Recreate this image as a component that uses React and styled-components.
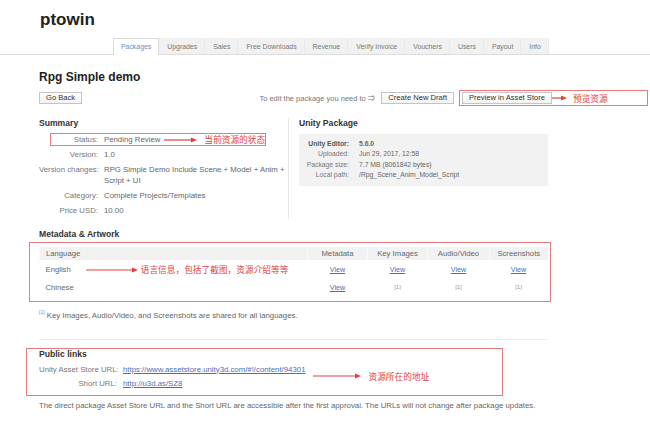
import React from "react";
import styled, { createGlobalStyle } from "styled-components";

const RED = "#e2413b";
const BOX_RED = "#e57b7b";

const GlobalStyle = createGlobalStyle`
  body {
    margin: 0;
    background: #fff;
    font-family: "Liberation Sans", Arial, "Noto Sans CJK SC", sans-serif;
    color: #666;
  }
  * { box-sizing: border-box; }
`;

const tabs = [
  "Packages",
  "Upgrades",
  "Sales",
  "Free Downloads",
  "Revenue",
  "Verify Invoice",
  "Vouchers",
  "Users",
  "Payout",
  "Info",
];

const summary = [
  { label: "Status:", value: "Pending Review", note: "当前资源的状态", highlight: true },
  { label: "Version:", value: "1.0" },
  { label: "Version changes:", value: "RPG Simple Demo Include Scene + Model + Anim + Script + UI" },
  { label: "Category:", value: "Complete Projects/Templates" },
  { label: "Price USD:", value: "10.00" },
];

const unityInfo = [
  { label: "Unity Editor:", value: "5.6.0", strong: true },
  { label: "Uploaded:", value: "Jun 29, 2017, 12:58" },
  { label: "Package size:", value: "7.7 MB (8061842 bytes)" },
  { label: "Local path:", value: "/Rpg_Scene_Anim_Model_Script" },
];

const Arrow = ({ width }) => (
  <ArrowSvg width={width} height="6" viewBox={`0 0 ${width} 6`}>
    <line x1="0" y1="3" x2={width - 4} y2="3" stroke={RED} strokeWidth="1.2" />
    <polygon points={`${width - 6},0.6 ${width},3 ${width - 6},5.4`} fill={RED} />
  </ArrowSvg>
);

const App = () => {
  return (
    <Page>
      <GlobalStyle />
      <Brand>ptowin</Brand>
      <TabBar>
        {tabs.map((t) => (
          <Tab key={t} $active={t === "Packages"}>
            {t}
          </Tab>
        ))}
      </TabBar>

      <Main>
        <Title>Rpg Simple demo</Title>
        <Actions>
          <Button>Go Back</Button>
          <ActionGroup>
            <Hint>To edit the package you need to ⇒</Hint>
            <Button>Create New Draft</Button>
            <PreviewBox>
              <Button>Preview in Asset Store</Button>
              <Arrow width={15} />
              <Note>预览资源</Note>
            </PreviewBox>
          </ActionGroup>
        </Actions>

        <Columns>
          <SummaryCol>
            <SectionHeading>Summary</SectionHeading>
            <SummaryList>
              {summary.map((row) => (
                <SummaryRow key={row.label} $highlight={row.highlight}>
                  <Label>{row.label}</Label>
                  <Value>
                    {row.value}
                    {row.note && (
                      <>
                        <Arrow width={33} />
                        <Note>{row.note}</Note>
                      </>
                    )}
                  </Value>
                </SummaryRow>
              ))}
            </SummaryList>
          </SummaryCol>
          <PackageCol>
            <SectionHeading>Unity Package</SectionHeading>
            <InfoBox>
              {unityInfo.map((row) => (
                <InfoRow key={row.label} $strong={row.strong}>
                  <span>{row.label}</span>
                  <span>{row.value}</span>
                </InfoRow>
              ))}
            </InfoBox>
          </PackageCol>
        </Columns>

        <MetaHeading>Metadata &amp; Artwork</MetaHeading>
        <MetaBox>
          <MetaTable>
            <colgroup>
              <col style={{ width: 268 }} />
              <col style={{ width: 60 }} />
              <col style={{ width: 60 }} />
              <col style={{ width: 62 }} />
              <col style={{ width: 58 }} />
            </colgroup>
            <thead>
              <tr>
                <Th $left>Language</Th>
                <Th>Metadata</Th>
                <Th>Key Images</Th>
                <Th>Audio/Video</Th>
                <Th>Screenshots</Th>
              </tr>
            </thead>
            <tbody>
              <tr>
                <Td $left>
                  <LangCell>
                    English
                    <LangArrow>
                      <Arrow width={52} />
                    </LangArrow>
                    <Note>语言信息，包括了截图，资源介绍等等</Note>
                  </LangCell>
                </Td>
                <Td><TableLink>View</TableLink></Td>
                <Td><TableLink>View</TableLink></Td>
                <Td><TableLink>View</TableLink></Td>
                <Td><TableLink>View</TableLink></Td>
              </tr>
              <tr>
                <Td $left>Chinese</Td>
                <Td><TableLink>View</TableLink></Td>
                <Td><Ref>[1]</Ref></Td>
                <Td><Ref>[1]</Ref></Td>
                <Td><Ref>[1]</Ref></Td>
              </tr>
            </tbody>
          </MetaTable>
        </MetaBox>
        <Footnote>
          <sup>[1]</sup> Key Images, Audio/Video, and Screenshots are shared for all languages.
        </Footnote>

        <Divider />

        <PublicBox>
          <SectionHeading>Public links</SectionHeading>
          <LinksBody>
            <LinkRows>
              <LinkRow>
                <Label>Unity Asset Store URL:</Label>
                <UrlLink>https://www.assetstore.unity3d.com/#!/content/94301</UrlLink>
              </LinkRow>
              <LinkRow>
                <Label>Short URL:</Label>
                <UrlLink>http://u3d.as/SZ8</UrlLink>
              </LinkRow>
            </LinkRows>
            <LinksNote>
              <Arrow width={48} />
              <Note>资源所在的地址</Note>
            </LinksNote>
          </LinksBody>
        </PublicBox>

        <Footer>
          The direct package Asset Store URL and the Short URL are accessible after the first
          approval. The URLs will not change after package updates.
        </Footer>
      </Main>
    </Page>
  );
};

const Page = styled.div`
  width: 650px;
  height: 423px;
  overflow: hidden;
`;

const Brand = styled.h1`
  margin: 0;
  padding-left: 40px;
  height: 38px;
  line-height: 39px;
  font-size: 17px;
  font-weight: 700;
  color: #222;
`;

const TabBar = styled.nav`
  display: flex;
  align-items: flex-start;
  height: 17px;
  padding-left: 113px;
  border-bottom: 1px solid #dcdcdc;
`;

const Tab = styled.a`
  display: block;
  height: ${(p) => (p.$active ? "17px" : "16px")};
  padding: 0 7px;
  line-height: 16px;
  font-size: 6.9px;
  color: ${(p) => (p.$active ? "#6d8cbf" : "#777")};
  background: ${(p) => (p.$active ? "#fff" : "#f1f1f1")};
  border: 1px solid ${(p) => (p.$active ? "#dcdcdc" : "#f1f1f1")};
  border-bottom: none;
  border-right-color: ${(p) => (p.$active ? "#dcdcdc" : "#e9e9e9")};
  position: relative;
`;

const Main = styled.main`
  padding-left: 39px;
  font-size: 7.8px;
  line-height: 11px;
`;

const Title = styled.h2`
  margin: 14px 0 0;
  font-size: 12px;
  line-height: 16px;
  font-weight: 700;
  color: #222;
`;

const Actions = styled.div`
  display: flex;
  align-items: center;
  justify-content: space-between;
  height: 16px;
  margin-top: 5px;
  padding-right: 2px;
`;

const ActionGroup = styled.div`
  display: flex;
  align-items: center;
  gap: 6px;
`;

const Hint = styled.span`
  font-size: 7.5px;
  color: #777;
`;

const Button = styled.button`
  height: 12px;
  padding: 0 6px;
  font-family: inherit;
  font-size: 7.6px;
  line-height: 10px;
  color: #333;
  background: linear-gradient(#fff, #f3f3f3);
  border: 1px solid #c4c4c4;
  border-radius: 0;
`;

const PreviewBox = styled.div`
  display: flex;
  align-items: center;
  width: 189px;
  height: 16px;
  margin-left: -1px;
  padding-left: 2px;
  border: 1px solid ${BOX_RED};

  & > span {
    margin-left: 6px;
  }
`;

const ArrowSvg = styled.svg`
  display: block;
  flex: none;
`;

const Note = styled.span`
  font-family: "Noto Sans CJK SC", sans-serif;
  font-size: 8.7px;
  line-height: 11px;
  color: ${RED};
  white-space: nowrap;
`;

const Columns = styled.div`
  display: grid;
  grid-template-columns: 249px 260px;
  margin-top: 12px;
`;

const SummaryCol = styled.section`
  padding-bottom: 3px;
`;

const PackageCol = styled.section`
  border-left: 1px solid #e8e8e8;
  padding-left: 10px;
`;

const SectionHeading = styled.h3`
  margin: 0;
  font-size: 8.6px;
  line-height: 11px;
  font-weight: 700;
  color: #333;
`;

const SummaryList = styled.div`
  display: flex;
  flex-direction: column;
  gap: 4px;
  margin-top: 5px;
`;

const SummaryRow = styled.div`
  position: relative;
  display: grid;
  grid-template-columns: 59px 194px;
  column-gap: 6px;

  ${(p) =>
    p.$highlight &&
    `
    &::before {
      content: "";
      position: absolute;
      left: 11px;
      right: 22px;
      top: -1px;
      bottom: -1px;
      border: 1px solid ${BOX_RED};
    }
  `}
`;

const Label = styled.span`
  text-align: right;
  color: #777;
  white-space: nowrap;
`;

const Value = styled.span`
  display: flex;
  flex-wrap: wrap;
  align-items: center;
  gap: 0 5px;
  color: #666;
  & > svg {
    margin-left: -1px;
  }
  & > svg + span {
    margin-left: 2px;
  }
`;

const InfoBox = styled.div`
  height: 52px;
  margin-top: 5px;
  padding-top: 5px;
  background: #f2f2f2;
`;

const InfoRow = styled.div`
  display: grid;
  grid-template-columns: 50px 1fr;
  column-gap: 10px;
  font-size: 6.8px;
  line-height: 10.3px;
  color: #666;
  font-weight: ${(p) => (p.$strong ? 700 : 400)};

  & > span:first-child {
    text-align: right;
    color: ${(p) => (p.$strong ? "#555" : "#777")};
  }
`;

const MetaHeading = styled(SectionHeading)`
  margin-top: 9.5px;
`;

const MetaBox = styled.div`
  width: 522px;
  margin: 2.5px 0 0 -10px;
  padding: 4px 3px 5px 9px;
  border: 1px solid ${BOX_RED};
`;

const MetaTable = styled.table`
  width: 508px;
  border-collapse: collapse;
  table-layout: fixed;
`;

const Th = styled.th`
  height: 13px;
  padding: 0 0 0 ${(p) => (p.$left ? "6px" : "0")};
  background: #f2f2f2;
  font-weight: 400;
  font-size: 7.7px;
  color: #666;
  text-align: ${(p) => (p.$left ? "left" : "center")};
  border-left: 1px solid #fafafa;
`;

const Td = styled.td`
  height: 18px;
  padding: 0 0 0 ${(p) => (p.$left ? "6px" : "0")};
  font-size: 7.7px;
  color: #666;
  text-align: ${(p) => (p.$left ? "left" : "center")};
  vertical-align: middle;
`;

const LangCell = styled.div`
  display: flex;
  align-items: center;
`;

const LangArrow = styled.span`
  margin: 2px 3px 0 15px;
`;

const TableLink = styled.a`
  font-size: 7.2px;
  color: #4a6fb5;
  text-decoration: underline;
`;

const Ref = styled.span`
  font-size: 6px;
  color: #999;
`;

const Footnote = styled.p`
  margin: 7.5px 0 0;
  color: #666;

  sup {
    font-size: 5px;
    line-height: 0;
    color: #888;
  }
`;

const Divider = styled.hr`
  width: 509px;
  height: 1px;
  margin: 18.5px 0 0;
  border: none;
  background: #ececec;
`;

const PublicBox = styled.section`
  width: 477px;
  margin: 8px 0 0 -13px;
  padding: 0 0 6px 12px;
  border: 1px solid ${BOX_RED};
`;

const LinksBody = styled.div`
  display: flex;
  align-items: center;
  margin-top: 3.5px;
`;

const LinkRows = styled.div`
  display: flex;
  flex-direction: column;
  gap: 3px;
`;

const LinkRow = styled.div`
  display: grid;
  grid-template-columns: 78px auto;
  column-gap: 6px;
`;

const UrlLink = styled.a`
  color: #4a6fb5;
  text-decoration: underline;
`;

const LinksNote = styled.div`
  display: flex;
  align-items: center;
  gap: 7px;
  margin-left: 8px;
`;

const Footer = styled.p`
  margin: 4.5px 0 0;
  color: #666;
`;

export default App;
